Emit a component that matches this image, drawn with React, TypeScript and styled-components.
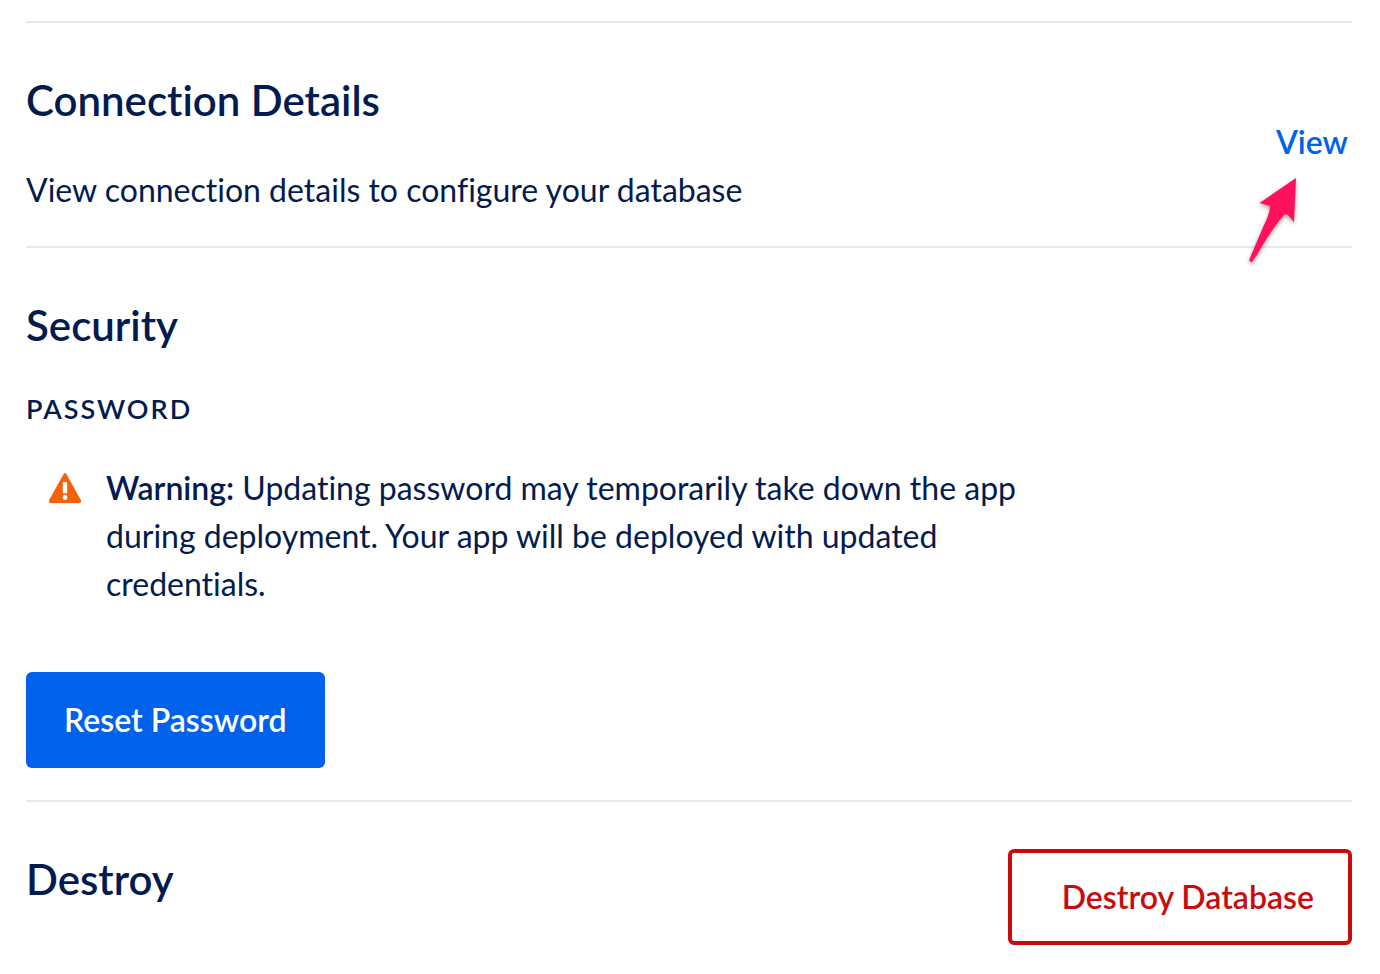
import React from 'react';
import styled, { createGlobalStyle } from 'styled-components';

const GlobalStyle = createGlobalStyle`
  *, *::before, *::after { box-sizing: border-box; }
  body {
    margin: 0;
    background: #fff;
    color: #031b4e;
    font: 400 32px/48px Lato, "Liberation Sans", sans-serif;
    font-variant-ligatures: none;
  }
`;

const Page = styled.main`
  padding: 21px 28px 0 26px;
`;

const Section = styled.section`
  border-top: 2px solid #e5e8ed;
  padding: 47px 0 32px;
`;

const SplitSection = styled(Section)<{ $align: string }>`
  display: flex;
  justify-content: space-between;
  align-items: ${(p) => p.$align};
`;

const Title = styled.h2`
  margin: 0;
  padding: 6px 0;
  font-size: 42px;
  line-height: 48px;
  font-weight: 600;
`;

const Description = styled.p`
  margin: 36px 0 0;
`;

const Subtitle = styled.h3`
  margin: 34px 0 0;
  font-size: 27px;
  line-height: 40px;
  font-weight: 600;
  letter-spacing: 2px;
  text-transform: uppercase;
`;

const ViewLink = styled.a`
  position: relative;
  padding-right: 4px;
  color: #0061eb;
  font-weight: 600;
  text-decoration: none;
`;

const Pointer = styled.svg`
  position: absolute;
  top: 51px;
  right: 52px;
  width: 64px;
  height: 100px;
  overflow: visible;
  filter: drop-shadow(0 2px 2px rgba(0, 0, 0, 0.4));
  pointer-events: none;
`;

const Warning = styled.div`
  display: flex;
  align-items: flex-start;
  gap: 24px;
  max-width: 1000px;
  margin-top: 35px;
  padding-left: 22px;

  svg {
    flex: none;
    margin-top: 8px;
  }

  p {
    margin: 0;
  }

  strong {
    font-weight: 600;
  }
`;

const Button = styled.button<{ $danger?: boolean }>`
  display: block;
  height: 96px;
  padding: ${(p) => (p.$danger ? '0 34px 0 50px' : '0 38px')};
  border: ${(p) => (p.$danger ? '4px solid #ca0b0b' : '0')};
  border-radius: 6px;
  background: ${(p) => (p.$danger ? '#fff' : '#0061eb')};
  color: ${(p) => (p.$danger ? '#ca0b0b' : '#fff')};
  font: inherit;
  font-weight: 600;
  white-space: nowrap;
  cursor: pointer;
`;

const Actions = styled.div`
  margin-top: 64px;
`;

export default function App() {
  return (
    <>
      <GlobalStyle />
      <Page>
        <SplitSection $align="center">
          <div>
            <Title>Connection Details</Title>
            <Description>View connection details to configure your database</Description>
          </div>
          <ViewLink href="#connection">
            View
            <Pointer viewBox="0 0 64 100" aria-hidden="true">
              <path
                d="M60 9 L23.500 34 L34 37 C34 43 31 50 28 56 L13.500 90 Q13 93.500 15.500 93 C19 90 23 82 28 74 C34 64 41 54 48 46 Q50 44.500 52 46 L58 53 Z"
                fill="#ff0f5c"
              />
            </Pointer>
          </ViewLink>
        </SplitSection>

        <Section>
          <Title>Security</Title>
          <Subtitle>Password</Subtitle>
          <Warning>
            <svg width="34" height="32" viewBox="0 0 34 32" aria-hidden="true">
              <path
                d="M15.500 2.200 Q17 0 18.500 2.200 L32.800 28 Q34 31 31 31 H3 Q0 31 1.200 28 Z"
                fill="#f85f0b"
              />
              <rect x="14.800" y="10" width="4.400" height="11.500" rx="1" fill="#fff" />
              <circle cx="17" cy="25.500" r="2.400" fill="#fff" />
            </svg>
            <p>
              <strong>Warning:</strong> Updating password may temporarily take down the app during
              deployment. Your app will be deployed with updated credentials.
            </p>
          </Warning>
          <Actions>
            <Button type="button">Reset Password</Button>
          </Actions>
        </Section>

        <SplitSection $align="flex-start">
          <Title>Destroy</Title>
          <Button type="button" $danger>
            Destroy Database
          </Button>
        </SplitSection>
      </Page>
    </>
  );
}
